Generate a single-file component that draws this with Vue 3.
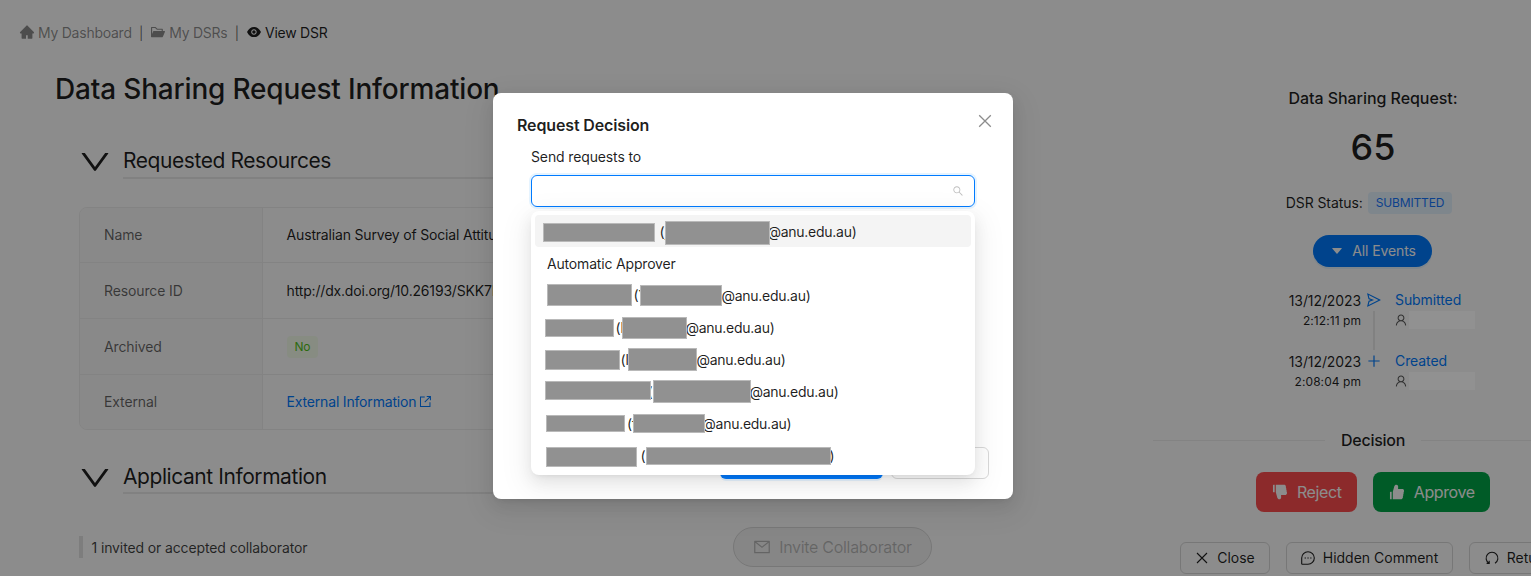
<script setup>
const icons = {
  home: 'M946.5 505L534.6 93.4a31.93 31.93 0 00-45.2 0L77.5 505c-12 12-18.8 28.3-18.8 45.3 0 35.3 28.7 64 64 64h43.4V908c0 17.7 14.3 32 32 32H448V716h112v224h265.9c17.7 0 32-14.3 32-32V614.3h43.4c17 0 33.3-6.7 45.3-18.8 24.9-25 24.9-65.5-.1-90.5z',
  folder: 'M928 444H820V330.4c0-17.7-14.3-32-32-32H473L355.7 186.2a8.15 8.15 0 00-5.5-2.2H96c-17.7 0-32 14.3-32 32v592c0 17.7 14.3 32 32 32h698c13 0 24.8-7.9 29.7-20l134-332c1.5-3.8 2.3-7.9 2.3-12 0-17.7-14.3-32-32-32zM136 256h188.5l119.6 114.4H748V444H238c-13 0-24.8 7.9-29.7 20L136 643.2V256z',
  eye: 'M396 512a112 112 0 10224 0 112 112 0 10-224 0zm546.2-25.8C847.4 286.5 704.1 186 512 186c-192.2 0-335.4 100.5-430.2 300.3a60.3 60.3 0 000 51.5C176.6 737.5 319.9 838 512 838c192.2 0 335.4-100.5 430.2-300.3 7.7-16.2 7.7-35 0-51.5zM508 688c-97.2 0-176-78.8-176-176s78.8-176 176-176 176 78.8 176 176-78.8 176-176 176z',
  down: 'M884 256h-75c-5.1 0-9.9 2.5-12.9 6.6L512 654.2 227.9 262.6c-3-4.1-7.8-6.6-12.9-6.6h-75c-6.5 0-10.3 7.4-6.5 12.7l352.6 486.1c12.8 17.6 39 17.6 51.7 0l352.6-486.1c3.9-5.3.1-12.7-6.4-12.7z',
  search: 'M909.6 854.5L649.9 594.8C690.2 542.7 712 479 712 412c0-80.2-31.3-155.4-87.9-212.1-56.6-56.7-132-87.9-212.1-87.9s-155.5 31.3-212.1 87.9C143.2 256.5 112 331.8 112 412c0 80.1 31.3 155.5 87.9 212.1C256.5 680.8 331.8 712 412 712c67 0 130.6-21.8 182.7-62l259.7 259.6a8.2 8.2 0 0011.6 0l43.6-43.5a8.2 8.2 0 000-11.6zM570.4 570.4C528 612.7 471.8 636 412 636s-116-23.3-158.4-65.6C211.3 528 188 471.8 188 412s23.3-116.1 65.6-158.4C296 211.3 352.2 188 412 188s116.1 23.2 158.4 65.6S636 352.2 636 412s-23.3 116.1-65.6 158.4z',
  mail: 'M928 160H96c-17.7 0-32 14.3-32 32v640c0 17.7 14.3 32 32 32h832c17.7 0 32-14.3 32-32V192c0-17.7-14.3-32-32-32zm-40 110.8V792H136V270.8l-27.6-21.5 39.3-50.5 42.8 33.3h643.1l42.8-33.3 39.3 50.5-27.7 21.5zM833.6 232L512 482 190.4 232l-42.8-33.3-39.3 50.5 27.6 21.5 341.6 265.6a55.99 55.99 0 0068.7 0L888 270.8l27.6-21.5-39.3-50.5-42.7 33.2z',
  send: 'M931.4 498.9L94.9 79.5c-3.4-1.7-7.3-2.1-11-1.2a15.99 15.99 0 00-11.7 19.3l86.2 352.2c1.3 5.3 5.2 9.6 10.4 11.3l147.7 50.7-147.6 50.7c-5.2 1.8-9.1 6-10.3 11.3L72.2 926.5c-.9 3.7-.5 7.6 1.2 10.9 3.9 7.9 13.5 11.1 21.5 7.2l836.5-417c3.1-1.5 5.6-4.1 7.2-7.1 3.9-8 .7-17.6-7.2-21.6zM170.8 826.3l50.3-205.6 295.2-101.3c2.3-.8 4.2-2.6 5-5 1.4-4.2-.8-8.7-5-10.2L221.1 403 171 198.2l628 314.9-628.2 313.2z',
  plus: 'M474 152h76v322h322v76H550v322h-76V550H152v-76h322z',
  user: 'M858.5 763.6a374 374 0 00-80.6-119.5 375.63 375.63 0 00-119.5-80.6c-.4-.2-.8-.3-1.2-.5C719.5 518 760 444.7 760 362c0-137-111-248-248-248S264 225 264 362c0 82.7 40.5 156 102.8 201.1-.4.2-.8.3-1.2.5-44.8 18.9-85 46-119.5 80.6a375.63 375.63 0 00-80.6 119.5A371.7 371.7 0 00136 901.8a8 8 0 008 8.2h60c4.4 0 7.9-3.5 8-7.8 2-77.2 33-149.5 87.8-204.3 56.7-56.7 132-87.9 212.2-87.9s155.5 31.2 212.2 87.9C779 752.7 810 825 812 902.2c.1 4.4 3.6 7.8 8 7.8h60a8 8 0 008-8.2c-1-47.8-10.9-94.3-29.5-138.2zM512 534c-45.9 0-89.1-17.9-121.6-50.4S340 407.9 340 362c0-45.9 17.9-89.1 50.4-121.6S466.1 190 512 190s89.1 17.9 121.6 50.4S684 316.1 684 362c0 45.9-17.9 89.1-50.4 121.6S557.9 534 512 534z',
  caret: 'M840.4 300H183.6c-19.7 0-30.7 20.8-18.5 35l328.4 380.8c9.4 10.9 27.5 10.9 37 0L858.9 335c12.2-14.2 1.2-35-18.5-35z',
  like: 'M885.9 533.7c16.8-22.2 26.1-49.4 26.1-77.7 0-44.9-25.1-87.4-65.5-111.1a67.67 67.67 0 00-34.3-9.3H572.4l6-122.9c1.4-29.7-9.1-57.9-29.5-79.4A106.62 106.62 0 00471 99.9c-52 0-98 35-111.8 85.1l-85.9 311h-.3v428h472.3c9.2 0 18.2-1.8 26.5-5.4 47.6-20.3 78.3-66.8 78.3-118.4 0-12.6-1.8-25-5.4-37 16.8-22.2 26.1-49.4 26.1-77.7 0-12.6-1.8-25-5.4-37 16.8-22.2 26.1-49.4 26.1-77.7-.2-12.6-2-25.1-5.6-37.1zM112 528v364c0 17.7 14.3 32 32 32h65V496h-65c-17.7 0-32 14.3-32 32z',
}

const timeline = [
  { date: '13/12/2023', time: '2:12:11 pm', label: 'Submitted', icon: icons.send, tail: true },
  { date: '13/12/2023', time: '2:08:04 pm', label: 'Created', icon: icons.plus, tail: false },
]

// name / mail: concealed areas as [left, top, width, height] within the option;
// lead: space taken by the name, gap: space from "(" to the visible ending
const options = [
  { active: true, lead: 112.5, gap: 108, open: '(j', end: '@anu.edu.au)', name: [8, 8, 112, 19], mail: [130, 6, 105, 24] },
  { text: 'Automatic Approver' },
  { lead: 86.5, gap: 88, open: '(Y', end: '@anu.edu.au)', name: [12, 5, 85, 22], mail: [105, 6, 82, 21] },
  { lead: 68.5, gap: 70, open: '(l', end: '@anu.edu.au)', name: [10, 8, 69, 18], mail: [87, 6, 65, 22] },
  { lead: 73.5, gap: 76, open: '(l', end: '@anu.edu.au)', name: [10, 7, 75, 20], mail: [93, 5, 69, 23] },
  { lead: 100.5, gap: 102, open: '(', end: '@anu.edu.au)', name: [10, 6, 106, 19], mail: [118, 5, 98, 23] },
  { lead: 80, gap: 75.3, open: '(t', end: '@anu.edu.au)', name: [11, 8, 79, 17], mail: [98, 7, 72, 19] },
  { lead: 93.5, gap: 189, open: '(', end: ')', name: [11, 8, 91, 20], mail: [111, 8, 185, 18] },
]
const box = ([x, y, w, h]) => ({ left: x + 'px', top: y + 'px', width: w + 'px', height: h + 'px' })
</script>

<template>
  <div class="page">
    <main class="main">
      <nav class="crumbs">
        <span class="crumb"><svg class="i16" viewBox="0 0 1024 1024"><path :d="icons.home" /></svg><span>My Dashboard</span></span>
        <span class="sep">|</span>
        <span class="crumb"><svg class="i16" viewBox="0 0 1024 1024"><path :d="icons.folder" /></svg><span>My DSRs</span></span>
        <span class="sep">|</span>
        <span class="crumb current"><svg class="i16" viewBox="0 0 1024 1024"><path :d="icons.eye" /></svg><span>View DSR</span></span>
      </nav>
      <h1 class="title">Data Sharing Request Information</h1>

      <section class="section">
        <svg class="chev" viewBox="0 0 1024 1024"><path :d="icons.down" /></svg>
        <h2>Requested Resources</h2>
      </section>
      <div class="desc">
        <div class="row"><div class="key">Name</div><div class="val">Australian Survey of Social Attitudes</div></div>
        <div class="row"><div class="key">Resource ID</div><div class="val">http://dx.doi.org/10.26193/SKK7P</div></div>
        <div class="row"><div class="key">Archived</div><div class="val"><span class="tag green">No</span></div></div>
        <div class="row">
          <div class="key">External</div>
          <div class="val link">
            <span>External Information</span>
            <svg class="ext" viewBox="0 0 14 14"><path d="M6.2 2.2H1.6v10.2h10.2V7.8M8.3 1.6h4v4M12.1 1.8L6.2 7.7" /></svg>
          </div>
        </div>
      </div>

      <section class="section second">
        <svg class="chev" viewBox="0 0 1024 1024"><path :d="icons.down" /></svg>
        <h2>Applicant Information</h2>
      </section>
      <div class="foot">
        <div class="note">1 invited or accepted collaborator</div>
        <button class="invite"><svg class="i18" viewBox="0 0 1024 1024"><path :d="icons.mail" /></svg><span>Invite Collaborator</span></button>
      </div>
    </main>

    <aside class="side">
      <div class="side-title">Data Sharing Request:</div>
      <div class="number">65</div>
      <div class="status"><span>DSR Status:</span><span class="tag blue">SUBMITTED</span></div>
      <button class="events"><svg class="i14" viewBox="0 0 1024 1024"><path :d="icons.caret" /></svg><span>All Events</span></button>
      <div class="timeline">
        <div v-for="t in timeline" :key="t.label" class="tl">
          <div class="when"><div class="date">{{ t.date }}</div><div class="time">{{ t.time }}</div></div>
          <div class="mark"><svg class="i16" viewBox="0 0 1024 1024"><path :d="t.icon" /></svg><i v-if="t.tail" class="tail"></i></div>
          <div class="what">
            <div class="lbl">{{ t.label }}</div>
            <div class="who"><svg class="i14" viewBox="0 0 1024 1024"><path :d="icons.user" /></svg><span class="blank"></span></div>
          </div>
        </div>
      </div>
      <div class="divider"><span>Decision</span></div>
      <div class="decide">
        <button class="big reject"><svg class="i18 flip" viewBox="0 0 1024 1024"><path :d="icons.like" /></svg><span>Reject</span></button>
        <button class="big approve"><svg class="i18" viewBox="0 0 1024 1024"><path :d="icons.like" /></svg><span>Approve</span></button>
      </div>
      <div class="actions">
        <button class="btn close-b"><svg class="line" viewBox="0 0 14 14"><path d="M2 2l10 10M12 2L2 12" /></svg><span>Close</span></button>
        <button class="btn hidden-b">
          <svg class="line" viewBox="0 0 14 14"><path d="M.7 13.2V7A6.3 6.3 0 1 1 7 13.3H.7" /><path d="M3.6 7h1.3M6.4 7h1.3M9.2 7h1.3" /></svg>
          <span>Hidden Comment</span>
        </button>
        <button class="btn return-b"><svg class="line" viewBox="0 0 14 14"><path d="M4 12.2A5.9 5.9 0 1 1 10 12.2M1.6 12.4h2.6V9.8" /></svg><span>Return</span></button>
      </div>
    </aside>

    <div class="mask"></div>

    <div class="modal">
      <div class="modal-title">Request Decision</div>
      <svg class="modal-x" viewBox="0 0 14 14"><path d="M1.2 1.2l11.6 11.6M12.8 1.2L1.2 12.8" /></svg>
      <div class="field">
        <div class="label">Send requests to</div>
        <div class="select"><svg class="i12" viewBox="0 0 1024 1024"><path :d="icons.search" /></svg></div>
        <div class="dropdown">
          <div v-for="(o, n) in options" :key="n" class="option" :class="{ active: o.active }">
            <template v-if="o.text"><span class="auto">{{ o.text }}</span></template>
            <template v-else>
              <span :style="{ width: o.lead + 'px' }"></span>
              <span :style="{ width: o.gap + 'px' }">{{ o.open }}</span>
              <span class="end">{{ o.end }}</span>
              <i class="redact" :style="box(o.name)"></i>
              <i class="redact" :style="box(o.mail)"></i>
            </template>
          </div>
        </div>
      </div>
      <div class="modal-foot"><span class="ok"></span><span class="cancel"></span></div>
    </div>
  </div>
</template>

<style>
html, body { margin: 0; overflow: hidden; background: #fff; }
</style>

<style scoped>
* { box-sizing: border-box; }
.page {
  position: relative; display: flex; width: 1531px; height: 576px; overflow: hidden; background: #fff;
  font: 14px/22px Inter, "Liberation Sans", sans-serif; color: rgba(0, 0, 0, .88); white-space: nowrap;
}
button { font: inherit; color: inherit; padding: 0; margin: 0; border: 0; background: none; display: flex; align-items: center; justify-content: center; white-space: nowrap; }
svg { fill: currentColor; flex: none; display: block; }
.i12 { width: 12px; height: 12px; }
.i14 { width: 14px; height: 14px; }
.i16 { width: 16px; height: 16px; }
.i18 { width: 18px; height: 18px; }
.flip { transform: scaleY(-1); }

.main { width: 1153px; flex: none; padding-top: 22px; }
.crumbs { display: flex; padding-left: 19px; height: 22px; color: rgba(0, 0, 0, .45); letter-spacing: -.25px; }
.crumb { display: flex; align-items: center; gap: 3px; }
.crumb svg { margin-top: -2px; }
.current { color: rgba(0, 0, 0, .88); }
.sep { width: 18.5px; text-align: center; font-size: 13px; color: rgba(0, 0, 0, .6); }
.title { margin: 25px 0 0 55px; height: 40px; line-height: 40px; font-size: 28px; font-weight: 500; letter-spacing: -.18px; }
.section { display: flex; margin: 35px 0 0 77px; width: 854px; }
.chev { width: 36px; height: 36px; }
.section h2 { flex: 1; margin: 0 0 0 10px; height: 35px; line-height: 33px; font-size: 21px; font-weight: 400; letter-spacing: -.43px; border-bottom: 2px solid #ebebeb; }
.desc { margin: 27px 0 0 79px; width: 852px; height: 223px; border: 1px solid #efefef; border-radius: 8px; overflow: hidden; display: grid; grid-template-rows: 55px 56px 56px 54px; }
.row { display: grid; grid-template-columns: 183px 1fr; border-bottom: 1px solid #efefef; }
.row:last-child { border-bottom: 0; }
.key, .val { padding-left: 24px; display: flex; align-items: center; letter-spacing: -.12px; }
.val { padding-left: 23.6px; letter-spacing: -.18px; }
.key { background: #fafafa; color: rgba(0, 0, 0, .6); border-right: 1px solid #efefef; }
.tag { display: inline-block; height: 22px; line-height: 22px; font-size: 12px; padding: 0 8px; border-radius: 4px; }
.green { color: #52c41a; background: #f6ffed; letter-spacing: -.3px; }
.link { color: #007bff; }
.ext { width: 13px; height: 13px; margin: -1px 0 0 3px; fill: none; stroke: currentColor; stroke-width: 1.1; }
.section.second { margin-top: 30px; }
.second h2 { height: 34px; }
.foot { display: flex; margin: 31px 0 0 79px; width: 853px; justify-content: space-between; }
.note { margin-top: 9px; height: 22px; line-height: 23px; padding-left: 8.5px; border-left: 4px solid #e4e4e4; color: rgba(0, 0, 0, .75); letter-spacing: -.12px; }
.invite { width: 199px; height: 40px; border: 1px solid #d9d9d9; border-radius: 20px; background: #f5f5f5; color: rgba(0, 0, 0, .25); font-size: 16px; gap: 8px; letter-spacing: -.3px; }

.side { width: 440px; flex: none; display: flex; flex-direction: column; align-items: center; padding-top: 86px; }
.side-title { height: 24px; line-height: 24px; font-size: 16px; font-weight: 500; letter-spacing: -.05px; }
.number { margin-top: 14px; height: 46px; line-height: 46px; font-size: 36px; font-weight: 500; }
.status { display: flex; gap: 5px; margin: 22px 8px 0 0; height: 22px; letter-spacing: -.08px; }
.blue { color: #1677ff; background: #e6f4ff; letter-spacing: -.15px; }
.events { width: 119px; height: 32px; margin: 21px 2px 0 0; padding-left: 2px; border-radius: 16px; background: #007bff; color: #fff; gap: 8px; box-shadow: 0 2px 0 rgba(5, 145, 255, .1); letter-spacing: -.1px; }
.timeline { margin: 22px 0 0 18px; width: 186px; height: 130px; }
.tl { display: grid; grid-template-columns: 72px 25px 1fr; height: 61px; }
.when { display: flex; flex-direction: column; align-items: flex-end; }
.date { height: 22px; margin-top: 1px; letter-spacing: -.1px; }
.time { font-size: 12px; height: 20px; line-height: 20px; margin-top: -1px; letter-spacing: .06px; }
.mark { display: flex; flex-direction: column; align-items: center; padding-top: 3px; color: #007bff; }
.tail { width: 2px; height: 39px; margin-top: 3px; background: #ececec; }
.what { padding-left: 9px; }
.lbl { color: #007bff; height: 22px; letter-spacing: -.08px; }
.who { display: flex; gap: 1px; align-items: center; height: 18px; margin: 0 0 0 -1px; color: rgba(0, 0, 0, .65); }
.blank { position: relative; z-index: 2; width: 66px; height: 18px; background: #919191; flex: none; }
.divider { width: 440px; display: flex; align-items: center; gap: 16px; font-size: 16px; font-weight: 500; line-height: 24px; height: 24px; margin-top: 9px; letter-spacing: -.25px; }
.divider::before, .divider::after { content: ""; flex: 1; height: 1px; background: #efefef; }
.divider span { width: 64px; text-align: center; }
.decide { display: flex; gap: 16px; margin-top: 20px; }
.big { height: 40px; border-radius: 8px; color: #fff; font-size: 16px; gap: 7.5px; letter-spacing: -.38px; }
.reject { width: 101px; background: #ff4d4f; }
.approve { width: 117px; background: #00a748; }
.actions { display: flex; gap: 16px; margin-top: 30px; letter-spacing: -.2px; }
.btn { height: 32px; border: 1px solid #d9d9d9; border-radius: 6px; gap: 8px; }
.close-b { width: 90px; }
.hidden-b { width: 167px; }
.return-b { width: 97px; }
.line { width: 14px; height: 14px; fill: none; stroke: currentColor; stroke-width: 1.1; overflow: visible; }

.mask { position: absolute; inset: 0; z-index: 1; background: rgba(0, 0, 0, .45); }
.modal {
  position: absolute; z-index: 3; left: 493px; top: 93px; width: 520px; height: 406px; padding: 20px 24px;
  display: flex; flex-direction: column; background: #fff; border-radius: 8px;
  box-shadow: 0 6px 16px 0 rgba(0, 0, 0, .08), 0 3px 6px -4px rgba(0, 0, 0, .12), 0 9px 28px 8px rgba(0, 0, 0, .05);
}
.modal-title { height: 24px; line-height: 24px; font-size: 16px; font-weight: 600; letter-spacing: -.14px; }
.modal-x { position: absolute; right: 21px; top: 21px; width: 14px; height: 14px; fill: none; stroke: #8c8c8c; stroke-width: 1.3; }
.field { position: relative; margin: 9px 14px 0; }
.label { height: 22px; letter-spacing: -.13px; }
.select { margin-top: 7px; height: 32px; border: 1px solid #007bff; border-radius: 6px; box-shadow: 0 0 0 2px rgba(5, 145, 255, .1); display: flex; align-items: center; justify-content: flex-end; padding-right: 10px; color: #bfbfbf; }
.dropdown {
  position: absolute; z-index: 4; left: 0; top: 65px; width: 444px; height: 264px; padding: 4px; background: #fff; border-radius: 8px;
  box-shadow: 0 6px 16px 0 rgba(0, 0, 0, .08), 0 3px 6px -4px rgba(0, 0, 0, .12), 0 9px 28px 8px rgba(0, 0, 0, .05);
}
.option { position: relative; display: flex; height: 32px; line-height: 22px; padding: 6px 12px 4px; border-radius: 4px; }
.option span { flex: none; }
.auto { letter-spacing: -.18px; }
.end { letter-spacing: -.27px; }
.active { background: #f4f4f4; }
.redact { position: absolute; background: #919191; border: 1px solid #b9b9b9; }
.modal-foot { margin-top: auto; display: flex; justify-content: flex-end; gap: 8px; }
.ok { width: 163px; height: 32px; border-radius: 6px; background: #007bff; box-shadow: 0 2px 0 rgba(5, 145, 255, .1); }
.cancel { width: 98px; height: 32px; border-radius: 6px; border: 1px solid #d9d9d9; background: #fff; }
</style>
